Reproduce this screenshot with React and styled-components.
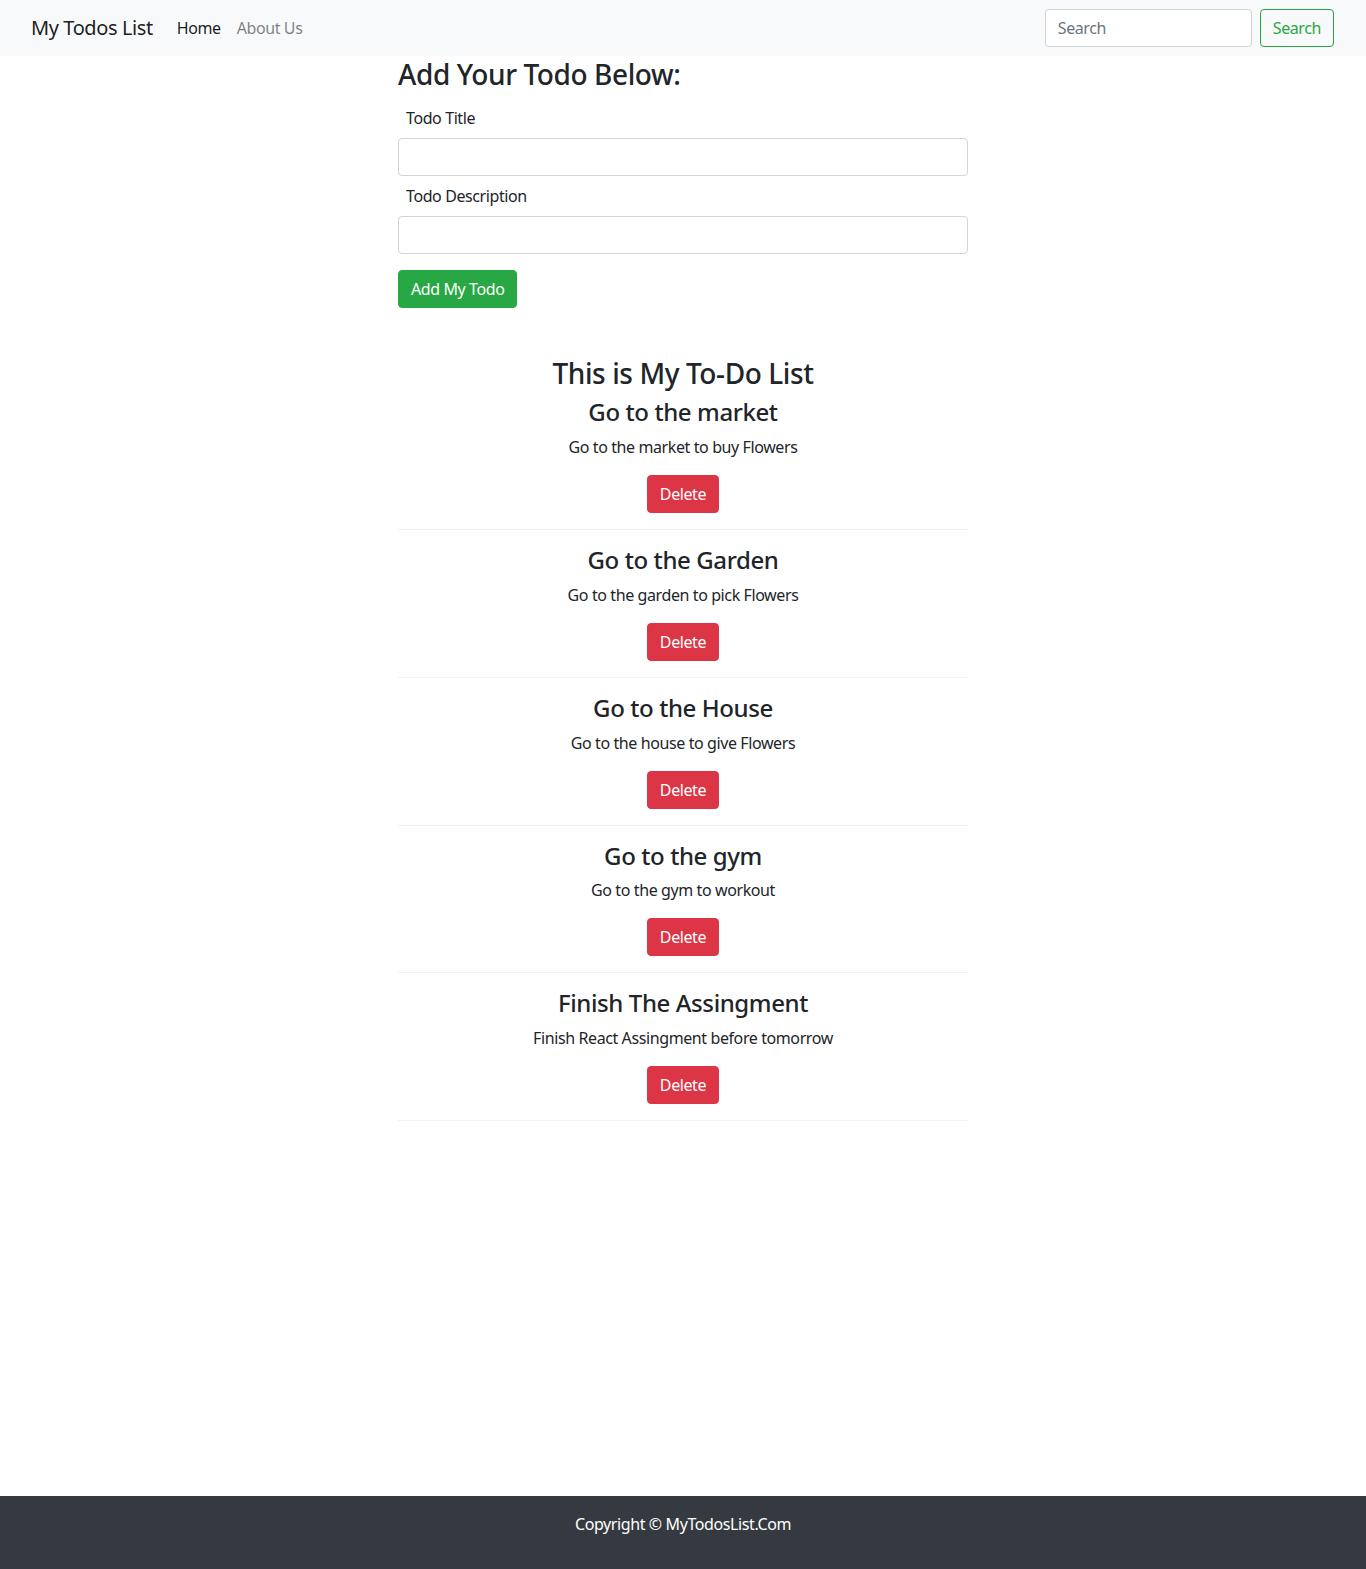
import React, { useState } from 'react'
import styled, { createGlobalStyle } from 'styled-components'

const initialTodos = [
   { sno: 1, title: 'Go to the market', desc: 'Go to the market to buy Flowers' },
   { sno: 2, title: 'Go to the Garden', desc: 'Go to the garden to pick Flowers' },
   { sno: 3, title: 'Go to the House', desc: 'Go to the house to give Flowers' },
   { sno: 4, title: 'Go to the gym', desc: 'Go to the gym to workout' },
   {
      sno: 5,
      title: 'Finish The Assingment',
      desc: 'Finish React Assingment before tomorrow',
   },
]

const App = () => {
   const [todos, setTodos] = useState(initialTodos)
   const [title, setTitle] = useState('')
   const [desc, setDesc] = useState('')

   const onDelete = (todo) => {
      setTodos(todos.filter((t) => t !== todo))
   }

   const submit = (e) => {
      e.preventDefault()
      if (!title || !desc) return
      setTodos([...todos, { sno: todos.length + 1, title, desc }])
      setTitle('')
      setDesc('')
   }

   return (
      <Page>
         <GlobalStyle />
         <Navbar>
            <NavLeft>
               <Brand href="#">My Todos List</Brand>
               <NavLink $active href="#">
                  Home
               </NavLink>
               <NavLink href="#">About Us</NavLink>
            </NavLeft>
            <SearchForm onSubmit={(e) => e.preventDefault()}>
               <SearchInput type="search" placeholder="Search" />
               <OutlineButton type="submit">Search</OutlineButton>
            </SearchForm>
         </Navbar>

         <Main>
            <FormTitle>Add Your Todo Below:</FormTitle>
            <form onSubmit={submit}>
               <FormGroup>
                  <Label htmlFor="title">Todo Title</Label>
                  <Input
                     id="title"
                     value={title}
                     onChange={(e) => setTitle(e.target.value)}
                  />
               </FormGroup>
               <FormGroup $last>
                  <Label htmlFor="desc">Todo Description</Label>
                  <Input
                     id="desc"
                     value={desc}
                     onChange={(e) => setDesc(e.target.value)}
                  />
               </FormGroup>
               <Button $variant="success" type="submit">
                  Add My Todo
               </Button>
            </form>

            <ListTitle>This is My To-Do List</ListTitle>
            {todos.length === 0
               ? 'No Todos to display'
               : todos.map((todo) => (
                    <TodoItem key={todo.sno}>
                       <TodoTitle>{todo.title}</TodoTitle>
                       <TodoDesc>{todo.desc}</TodoDesc>
                       <Button $variant="danger" onClick={() => onDelete(todo)}>
                          Delete
                       </Button>
                       <Divider />
                    </TodoItem>
                 ))}
         </Main>

         <Footer>
            <p>Copyright &copy; MyTodosList.Com</p>
         </Footer>
      </Page>
   )
}

export default App

const GlobalStyle = createGlobalStyle`
   * {
      box-sizing: border-box;
   }
   body {
      margin: 0;
      font-family: "Segoe UI", "Noto Sans", "Open Sans", sans-serif;
      font-size: 16px;
      line-height: 1.5;
      letter-spacing: -0.025em;
      color: #212529;
      background: #fff;
   }
   input, button {
      letter-spacing: inherit;
   }
`

const Page = styled.div`
   display: flex;
   flex-direction: column;
   min-height: 100vh;
`

const Navbar = styled.nav`
   display: flex;
   align-items: center;
   justify-content: space-between;
   height: 56px;
   padding: 0 32px 0 31px;
   background: #f8f9fa;
`

const NavLeft = styled.div`
   display: flex;
   align-items: center;
`

const Brand = styled.a`
   font-size: 20px;
   line-height: 30px;
   margin-right: 16px;
   color: rgba(0, 0, 0, 0.9);
   text-decoration: none;
`

const NavLink = styled.a`
   padding: 8px;
   font-size: 16px;
   color: ${(p) => (p.$active ? 'rgba(0, 0, 0, 0.9)' : 'rgba(0, 0, 0, 0.5)')};
   text-decoration: none;
`

const SearchForm = styled.form`
   display: flex;
   align-items: center;
   gap: 8px;
`

const SearchInput = styled.input`
   width: 207px;
   height: 38px;
   padding: 6px 12px;
   font-family: inherit;
   font-size: 16px;
   color: #495057;
   border: 1px solid #ced4da;
   border-radius: 4px;
   background: #fff;
   outline: none;
   &::placeholder {
      color: #6c757d;
   }
`

const OutlineButton = styled.button`
   height: 38px;
   padding: 6px 12px;
   font-family: inherit;
   font-size: 16px;
   color: #28a745;
   background: transparent;
   border: 1px solid #28a745;
   border-radius: 4px;
   cursor: pointer;
`

const Main = styled.main`
   width: 570px;
   margin: 0 auto;
   padding-bottom: 40px;
`

const FormTitle = styled.h3`
   margin: 2px 0 14px;
   font-size: 28px;
   font-weight: 500;
   line-height: 1.2;
`

const FormGroup = styled.div`
   margin-bottom: ${(p) => (p.$last ? '16px' : '8px')};
`

const Label = styled.label`
   display: inline-block;
   margin: 0 0 8px 8px;
   font-size: 16px;
`

const Input = styled.input`
   display: block;
   width: 100%;
   height: 38px;
   padding: 6px 12px;
   font-family: inherit;
   font-size: 16px;
   color: #495057;
   border: 1px solid #ced4da;
   border-radius: 4px;
   outline: none;
`

const Button = styled.button`
   height: 38px;
   padding: 6px 12px;
   font-family: inherit;
   font-size: 16px;
   line-height: 1.5;
   color: #fff;
   background: ${(p) => (p.$variant === 'danger' ? '#dc3545' : '#28a745')};
   border: 1px solid
      ${(p) => (p.$variant === 'danger' ? '#dc3545' : '#28a745')};
   border-radius: 4px;
   cursor: pointer;
`

const ListTitle = styled.h3`
   margin: 49px 0 8px;
   text-align: center;
   font-size: 28px;
   font-weight: 500;
   line-height: 1.2;
`

const TodoItem = styled.div`
   display: flex;
   flex-direction: column;
   align-items: center;
`

const TodoTitle = styled.h4`
   margin: 0 0 8px;
   font-size: 24px;
   font-weight: 500;
   line-height: 1.2;
`

const TodoDesc = styled.p`
   margin: 0 0 16px;
`

const Divider = styled.hr`
   align-self: stretch;
   margin: 16px 0;
   border: 0;
   border-top: 1px solid rgba(0, 0, 0, 0.05);
`

const Footer = styled.footer`
   margin-top: auto;
   padding: 16px 0 17px;
   text-align: center;
   color: #fff;
   background: #343a40;
   & p {
      margin: 0 0 16px;
   }
`
